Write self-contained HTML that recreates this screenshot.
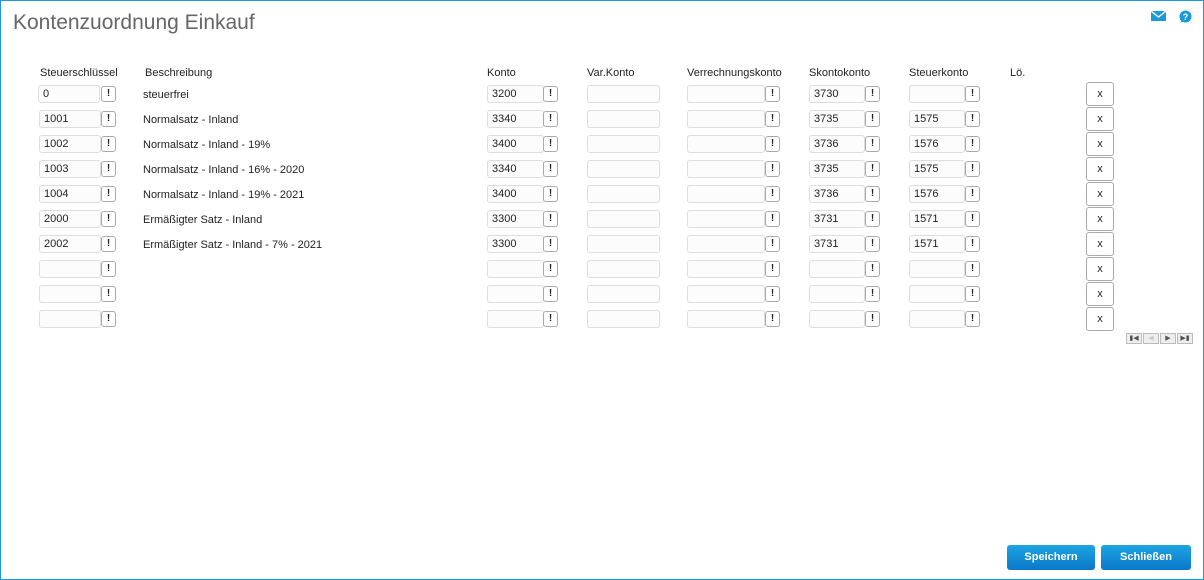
<!DOCTYPE html>
<html><head><meta charset="utf-8"><style>
*{box-sizing:border-box;margin:0;padding:0}
body{width:1204px;height:580px;position:relative;background:#fff;font-family:"Liberation Sans",Arial,sans-serif;font-size:11px;color:#222;overflow:hidden}
.frame{position:absolute;left:0;top:0;width:1204px;height:580px;border:1px solid #1a9ad9}
h1{position:absolute;left:13px;top:11px;font-size:21px;font-weight:normal;color:#666}
.h{position:absolute;top:67px;font-size:11px}
.r{position:absolute;left:0;width:1204px;height:25px}
.i{position:absolute;top:3px;height:18px;border:1px solid #ddd;border-radius:3px;background:#fcfcfc;padding-left:4px;line-height:17px;font-size:11px}
.b{position:absolute;top:4px;width:15px;height:16px;border:1px solid #aaa;border-radius:3px;background:#fff;font-weight:bold;font-size:10px;text-align:center;line-height:14px}
.t{position:absolute;left:143px;top:7px}
.x{position:absolute;left:1086px;top:0;width:28px;height:24px;border:1px solid #aaa;border-radius:3px;text-align:center;line-height:22px;font-size:11px}
.c1{left:39px;width:62px}.b1{left:101px}
.c2{left:487px;width:57px}.b2{left:543px}
.c3{left:587px;width:73px}
.c4{left:687px;width:78px}.b4{left:765px}
.c5{left:809px;width:56px}.b5{left:865px}
.c6{left:909px;width:56px}.b6{left:965px}
.pg{position:absolute;top:333px;width:16px;height:11px;border:1px solid #bbb;background:#eee;font-size:7px;text-align:center;line-height:9px;color:#555}
.btn{position:absolute;top:545px;height:25px;border-radius:3px;background:linear-gradient(#1ea4e4,#0a78c8);color:#fff;font-weight:bold;font-size:11px;text-align:center;line-height:25px}
</style></head><body>
<div class="frame"></div>
<h1>Kontenzuordnung Einkauf</h1>
<svg style="position:absolute;left:1151px;top:11px" width="15" height="10" viewBox="0 0 15 10"><rect width="15" height="10" fill="#1a9ad9"/><path d="M0 0 L7.5 6 L15 0" stroke="#fff" stroke-width="1.3" fill="none"/></svg>
<svg style="position:absolute;left:1178px;top:10px" width="14" height="14" viewBox="0 0 14 14"><circle cx="7.5" cy="6.5" r="6" fill="#1a9ad9"/><path d="M2 13 L4 10 L6 11Z" fill="#1a9ad9"/><text x="7.5" y="10" font-size="9" font-weight="bold" fill="#fff" text-anchor="middle" font-family="Liberation Sans">?</text></svg>
<div class="h" style="left:40px">Steuerschlüssel</div>
<div class="h" style="left:145px">Beschreibung</div>
<div class="h" style="left:487px">Konto</div>
<div class="h" style="left:587px">Var.Konto</div>
<div class="h" style="left:687px">Verrechnungskonto</div>
<div class="h" style="left:809px">Skontokonto</div>
<div class="h" style="left:909px">Steuerkonto</div>
<div class="h" style="left:1010px">Lö.</div>

<div class="r" style="top:82px"><div class="i c1" style="left:38px">0</div><div class="b b1">!</div><div class="t">steuerfrei</div><div class="i c2">3200</div><div class="b b2">!</div><div class="i c3"></div><div class="i c4"></div><div class="b b4">!</div><div class="i c5">3730</div><div class="b b5">!</div><div class="i c6"></div><div class="b b6">!</div><div class="x">x</div></div>
<div class="r" style="top:107px"><div class="i c1">1001</div><div class="b b1">!</div><div class="t">Normalsatz - Inland</div><div class="i c2">3340</div><div class="b b2">!</div><div class="i c3"></div><div class="i c4"></div><div class="b b4">!</div><div class="i c5">3735</div><div class="b b5">!</div><div class="i c6">1575</div><div class="b b6">!</div><div class="x">x</div></div>
<div class="r" style="top:132px"><div class="i c1">1002</div><div class="b b1">!</div><div class="t">Normalsatz - Inland - 19%</div><div class="i c2">3400</div><div class="b b2">!</div><div class="i c3"></div><div class="i c4"></div><div class="b b4">!</div><div class="i c5">3736</div><div class="b b5">!</div><div class="i c6">1576</div><div class="b b6">!</div><div class="x">x</div></div>
<div class="r" style="top:157px"><div class="i c1">1003</div><div class="b b1">!</div><div class="t">Normalsatz - Inland - 16% - 2020</div><div class="i c2">3340</div><div class="b b2">!</div><div class="i c3"></div><div class="i c4"></div><div class="b b4">!</div><div class="i c5">3735</div><div class="b b5">!</div><div class="i c6">1575</div><div class="b b6">!</div><div class="x">x</div></div>
<div class="r" style="top:182px"><div class="i c1">1004</div><div class="b b1">!</div><div class="t">Normalsatz - Inland - 19% - 2021</div><div class="i c2">3400</div><div class="b b2">!</div><div class="i c3"></div><div class="i c4"></div><div class="b b4">!</div><div class="i c5">3736</div><div class="b b5">!</div><div class="i c6">1576</div><div class="b b6">!</div><div class="x">x</div></div>
<div class="r" style="top:207px"><div class="i c1">2000</div><div class="b b1">!</div><div class="t">Ermäßigter Satz - Inland</div><div class="i c2">3300</div><div class="b b2">!</div><div class="i c3"></div><div class="i c4"></div><div class="b b4">!</div><div class="i c5">3731</div><div class="b b5">!</div><div class="i c6">1571</div><div class="b b6">!</div><div class="x">x</div></div>
<div class="r" style="top:232px"><div class="i c1">2002</div><div class="b b1">!</div><div class="t">Ermäßigter Satz - Inland - 7% - 2021</div><div class="i c2">3300</div><div class="b b2">!</div><div class="i c3"></div><div class="i c4"></div><div class="b b4">!</div><div class="i c5">3731</div><div class="b b5">!</div><div class="i c6">1571</div><div class="b b6">!</div><div class="x">x</div></div>
<div class="r" style="top:257px"><div class="i c1"></div><div class="b b1">!</div><div class="i c2"></div><div class="b b2">!</div><div class="i c3"></div><div class="i c4"></div><div class="b b4">!</div><div class="i c5"></div><div class="b b5">!</div><div class="i c6"></div><div class="b b6">!</div><div class="x">x</div></div>
<div class="r" style="top:282px"><div class="i c1"></div><div class="b b1">!</div><div class="i c2"></div><div class="b b2">!</div><div class="i c3"></div><div class="i c4"></div><div class="b b4">!</div><div class="i c5"></div><div class="b b5">!</div><div class="i c6"></div><div class="b b6">!</div><div class="x">x</div></div>
<div class="r" style="top:307px"><div class="i c1"></div><div class="b b1">!</div><div class="i c2"></div><div class="b b2">!</div><div class="i c3"></div><div class="i c4"></div><div class="b b4">!</div><div class="i c5"></div><div class="b b5">!</div><div class="i c6"></div><div class="b b6">!</div><div class="x">x</div></div>

<div class="pg" style="left:1126px">&#9646;&#9664;</div>
<div class="pg" style="left:1143px;color:#ccc">&#9664;</div>
<div class="pg" style="left:1160px">&#9654;</div>
<div class="pg" style="left:1177px">&#9654;&#9646;</div>

<div class="btn" style="left:1007px;width:88px">Speichern</div>
<div class="btn" style="left:1101px;width:90px">Schließen</div>
</body></html>
